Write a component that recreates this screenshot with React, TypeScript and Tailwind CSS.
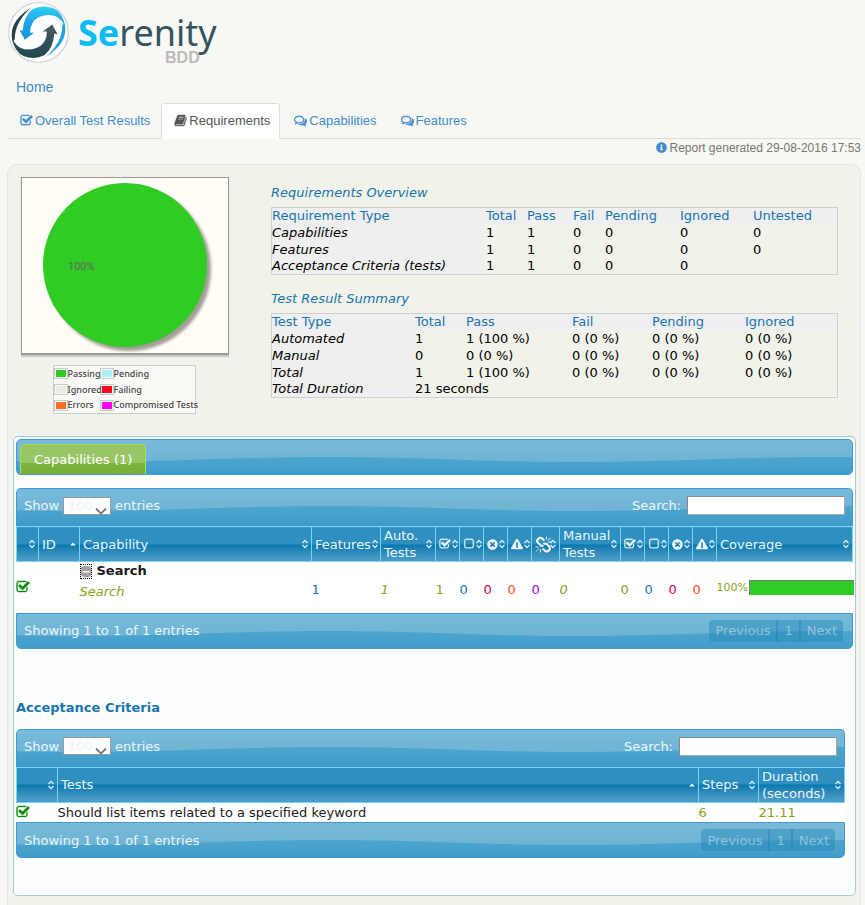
import { useId } from "react";
import type { ReactNode } from "react";
import { FaExclamationTriangle, FaInfoCircle, FaTimesCircle } from "react-icons/fa";

const paths = {
  check:
    "M1472 930v318q0 119-84.5 203.5t-203.5 84.5h-832q-119 0-203.5-84.5t-84.5-203.5v-832q0-119 84.5-203.5t203.5-84.5h832q63 0 117 25 15 7 18 23 3 17-9 29l-49 49q-10 10-23 10-3 0-9-2-23-6-45-6h-832q-66 0-113 47t-47 113v832q0 66 47 113t113 47h832q66 0 113-47t47-113v-254q0-13 9-22l64-64q10-10 23-10 6 0 12 3 20 8 20 29zm231-489l-814 814q-24 24-57 24t-57-24l-430-430q-24-24-24-57t24-57l110-110q24-24 57-24t57 24l263 263 647-647q24-24 57-24t57 24l110 110q24 24 24 57t-24 57z",
  square:
    "M1312 256h-832q-66 0-113 47t-47 113v832q0 66 47 113t113 47h832q66 0 113-47t47-113v-832q0-66-47-113t-113-47zm288 160v832q0 119-84.5 203.5t-203.5 84.5h-832q-119 0-203.5-84.5t-84.5-203.5v-832q0-119 84.5-203.5t203.5-84.5h832q119 0 203.5 84.5t84.5 203.5z",
  comments:
    "M704 384q-153 0-286 52t-211.5 141-78.5 191q0 82 53 158t149 132l97 56-35 84q34-20 62-39l44-31 53 10q78 14 153 14 153 0 286-52t211.5-141 78.5-191-78.5-191-211.5-141-286-52zm0-128q191 0 353.5 68.5t256.5 186.5 94 257-94 257-256.5 186.5-353.5 68.5q-86 0-176-16-124 88-278 128-36 9-86 16h-3q-11 0-20.5-8t-11.5-21q-1-3-1-6.5t.5-6.5 2-6l2.5-5 3.5-5.5 4-5 4.5-5 4-4.5q5-6 23-25t26-29.5 22.5-29 25-38.5 20.5-44q-124-72-195-177t-71-224q0-139 94-257t256.5-186.5 353.5-68.5zm822 1169q10 24 20.5 44t25 38.5 22.5 29 26 29.5 23 25q1 1 4 4.5t4.5 5 4 5 3.5 5.5l2.5 5 2 6 .5 6.5-1 6.5q-3 14-13 22t-22 7q-50-7-86-16-154-40-278-128-90 16-176 16-271 0-472-132 58 4 88 4 161 0 309-45t264-129q125-92 192-212t67-254q0-77-23-152 129 71 204 178t75 230q0 120-71 224.5t-195 176.5z",
  book: "M1703 478q40 57 18 129l-275 906q-19 64-76.5 107.5t-122.5 43.5h-923q-77 0-148.5-53.5t-99.5-131.5q-24-67-2-127 0-4 3-27t4-37q1-8-3-21.5t-3-19.5q2-11 8-21t16.5-23.5 16.5-23.5q23-38 45-91.5t30-91.5q3-10 .5-30t-.5-28q3-11 17-28t17-23q21-36 42-92t25-90q1-9-2.5-32t.5-28q4-13 22-30.5t22-22.5q19-26 42.5-84.5t27.5-96.5q1-8-3-25.5t-2-26.5q2-8 9-18t18-23 17-21q8-12 16.5-30.5t15-35 16-36 19.5-32 26.5-23.5 36-11.5 47.5 5.5l-1 3q38-9 51-9h761q74 0 114 56t18 130l-274 906q-36 119-71.5 153.5t-128.5 34.5h-869q-27 0-38 15-11 16-1 43 24 70 144 70h923q29 0 56-15.5t35-41.5l300-987q7-22 5-57 38 15 59 43zm-1064 2q-4 13 2 22.5t20 9.5h608q13 0 25.5-9.5t16.5-22.5l21-64q4-13-2-22.5t-20-9.5h-608q-13 0-25.5 9.5t-16.5 22.5zm-83 256q-4 13 2 22.5t20 9.5h608q13 0 25.5-9.5t16.5-22.5l21-64q4-13-2-22.5t-20-9.5h-608q-13 0-25.5 9.5t-16.5 22.5z",
};

function Icon({ name, className = "size-[14px]" }: { name: keyof typeof paths; className?: string }) {
  return (
    <svg
      viewBox="0 0 1792 1792"
      fill="currentColor"
      stroke="currentColor"
      strokeWidth="50"
      aria-hidden="true"
      className={`shrink-0 ${className}`}
    >
      <path d={paths[name]} />
    </svg>
  );
}

/* Snapped chain with small burst rays */
function BrokenLink() {
  return (
    <svg viewBox="0 0 17 17" className="-mr-1 size-[17px] shrink-0" fill="none" stroke="currentColor" aria-hidden="true">
      <path d="M9.5 4.5 L7 2.4 Q5 1 3.2 2.8 Q1.2 4.8 2.8 6.6 L5.6 9.3 Q7 10.3 8.4 9.3" strokeWidth="2.2" />
      <path d="M7.5 12.5 L10 14.8 Q12 16.2 14 14.4 Q15.8 12.4 14.2 10.6 L11.6 8 Q10 7 8.4 8.2" strokeWidth="2.2" />
      <path d="M11.5 0.5 V3.5 M12.8 4.4 L15.6 2 M13 6 H16.5 M5.5 13.2 V16.5 M4.2 12.4 L1.5 15 M3.8 11 H0.5" strokeWidth="1" />
    </svg>
  );
}

function Logo() {
  const arrow =
    "M197 84 Q190 40 160 27 Q128 16 100 30 Q72 52 70 95 L60 92 L76 122 L104 101 L92 101 Q92 68 118 54 Q146 42 170 52 Q188 62 197 84 Z";
  const crescent = "M194 70 Q210 128 140 172 Q188 128 188 78 Z";
  return (
    <div className="flex h-[70px] items-start pt-[2px] pl-[1px]">
      <svg viewBox="26 9 182 182" className="size-[61px] shrink-0" role="img" aria-label="Serenity logo">
        <defs>
          <linearGradient id="logo-blue" x1="0" y1="0" x2="0" y2="1">
            <stop offset="0" stopColor="#2fd0f2" />
            <stop offset="0.5" stopColor="#1ea2e8" />
            <stop offset="1" stopColor="#1595e0" />
          </linearGradient>
          <linearGradient id="logo-dark" x1="0" y1="0" x2="0" y2="1">
            <stop offset="0" stopColor="#1f4650" />
            <stop offset="1" stopColor="#4b5a63" />
          </linearGradient>
        </defs>
        <circle cx="117" cy="100" r="89" fill="#fff" stroke="#d3d6dc" strokeWidth="4" />
        <path d={arrow} fill="url(#logo-blue)" />
        <path d={crescent} fill="#1fa3e6" />
        <g transform="rotate(180 117 99)">
          <path d={arrow} fill="url(#logo-dark)" />
          <path d={crescent} fill="#243e49" />
        </g>
      </svg>
      <div className="flex flex-col pt-[13px] pl-[9px]">
        <span className="font-['Noto_Sans',sans-serif] text-[36px] leading-9 text-[#36545f]">
          <b className="text-[#0bbcf6]">Se</b>renity
        </span>
        <b className="self-end pr-[17px] font-['Liberation_Sans',Arial,sans-serif] text-base leading-[14px] text-[#bbb]">
          BDD
        </b>
      </div>
    </div>
  );
}

/* Blue glossy bar with a repeating wave highlight */
function Bar({ className, children }: { className: string; children?: ReactNode }) {
  const id = useId();
  return (
    <div
      className={`relative overflow-hidden border border-[#4297d7] bg-linear-to-b from-[#79bad9] to-[#66b0d3] text-[#eaf5f7] ${className}`}
    >
      <svg className="absolute inset-0 size-full" aria-hidden="true">
        <defs>
          <linearGradient id={`${id}g`} x1="0" y1="0" x2="0" y2="1">
            <stop offset="0" stopColor="#4ea5ce" />
            <stop offset="1" stopColor="#3a9aca" />
          </linearGradient>
          <pattern id={id} width="500" height="40" patternUnits="userSpaceOnUse" patternTransform="translate(60)">
            <path d="M0 22 C90 22 160 17 250 17 C350 17 400 22 500 22 V40 H0 Z" fill={`url(#${id}g)`} />
          </pattern>
        </defs>
        <rect width="100%" height="100%" fill={`url(#${id})`} />
      </svg>
      <div className="relative h-full">{children}</div>
    </div>
  );
}

function SortMark({ up = false }: { up?: boolean }) {
  return (
    <svg viewBox="0 0 8 10" className="h-[10px] w-2 shrink-0" aria-hidden="true">
      {up ? (
        <path d="M1 6.5 L4 3.5 L7 6.5 Z" fill="#eaf5f7" />
      ) : (
        <path d="M1.5 4 L4 1.5 L6.5 4 M1.5 6 L4 8.5 L6.5 6" fill="none" stroke="#d5eefa" strokeWidth="1.3" />
      )}
    </svg>
  );
}

function Th({ children, label, up }: { children?: ReactNode; label: string; up?: boolean }) {
  return (
    <th
      scope="col"
      className="h-[35px] border border-[#77d5f7] bg-linear-to-b from-[#2e8fc0] from-50% via-[#0078ae] via-50% to-[#4fa0c9] p-0 font-normal text-[#eaf5f7]"
    >
      <button
        type="button"
        aria-label={`Sort by ${label}`}
        className="flex w-full items-center justify-between pr-[2px] pl-[3px] text-left leading-[17px]"
      >
        <span>{children}</span>
        <SortMark up={up} />
      </button>
    </th>
  );
}

function LengthBar({ id }: { id: string }) {
  return (
    <Bar className="h-[38px] rounded-t-[5px] border-b-0">
      <div className="flex items-start justify-between px-[7px] pt-[7px] leading-[19px]">
        <label htmlFor={`${id}-length`} className="flex items-center">
          Show
          <span className="relative mx-1 flex">
            <select
              id={`${id}-length`}
              className="h-[18px] w-12 appearance-none border border-[#999] bg-white pl-1 leading-4 text-[#eaf5f7]"
            >
              <option>100</option>
            </select>
            <svg viewBox="0 0 12 8" className="pointer-events-none absolute right-1 bottom-0 h-2 w-3" aria-hidden="true">
              <path d="M1 1.5 L6 6.5 L11 1.5" fill="none" stroke="#777" strokeWidth="1.8" />
            </svg>
          </span>
          entries
        </label>
        <label htmlFor={`${id}-search`} className="flex items-center">
          Search:
          <input
            id={`${id}-search`}
            className="ml-[6px] h-[19px] w-[158px] border border-[#888] border-r-[#aaa] border-b-[#aaa] bg-white px-1 text-black"
          />
        </label>
      </div>
    </Bar>
  );
}

function InfoBar() {
  const base = "h-[22px] bg-[#2487b8]/45 px-[6px] text-[#eaf5f7]/45";
  return (
    <Bar className="h-9 rounded-b-[5px]">
      <div className="flex items-center justify-between pt-[6px] pr-[9px] pl-[7px]">
        <span>Showing 1 to 1 of 1 entries</span>
        <div className="flex">
          <button type="button" className={`${base} rounded-l-[4px] border-r-2 border-[#1d80b3]/40`}>
            Previous
          </button>
          <button type="button" className={`${base} border-r-2 border-[#1d80b3]/40 px-1`}>
            1
          </button>
          <button type="button" className={`${base} rounded-r-[4px]`}>
            Next
          </button>
        </div>
      </div>
    </Bar>
  );
}

function Tab({ icon, label, active }: { icon: keyof typeof paths; label: string; active?: boolean }) {
  return (
    <li className="-mb-px">
      <a
        href="#"
        className={`flex h-9 items-center gap-[2px] rounded-t-[4px] border pr-[9px] pb-[2px] pl-3 ${
          active ? "border-[#ddd] border-b-white bg-white text-[#555]" : "border-transparent text-[#428bca]"
        }`}
      >
        <Icon name={icon} className="size-[13px]" />
        <span>{label}</span>
      </a>
    </li>
  );
}

const legend = [
  ["Passing", "bg-[#30cb23]", "Pending", "bg-[#a8f0f3]"],
  ["Ignored", "bg-[#eeebe0]", "Failing", "bg-[#fb0a22]"],
  ["Errors", "bg-[#ff6f20]", "Compromised Tests", "bg-[#ff00ff]"],
];

function Swatch({ color }: { color: string }) {
  return (
    <td className="w-[14px] p-0">
      <div className="h-[11px] w-[14px] border border-[#ccc] p-px">
        <div className={`h-full ${color}`} />
      </div>
    </td>
  );
}

function SummaryTable({ widths, head, rows }: { widths: string[]; head: string[]; rows: string[][] }) {
  return (
    <table className="w-full table-fixed border-separate border-spacing-0 border border-[#d0d0d0] text-left leading-4 text-black">
      <colgroup>
        {widths.map((w, i) => (
          <col key={i} className={w} />
        ))}
      </colgroup>
      <thead>
        <tr className="bg-[#efefef] text-[#1776ae]">
          {head.map((h) => (
            <th key={h} scope="col" className="h-4 p-0 font-normal">
              {h}
            </th>
          ))}
        </tr>
      </thead>
      <tbody>
        {rows.map(([name, ...cells], r) => (
          <tr key={name}>
            <th
              scope="row"
              className={`bg-[#efefef] p-0 font-normal whitespace-nowrap italic ${
                r === rows.length - 1 ? "h-4" : "h-[17px]"
              }`}
            >
              {name}
            </th>
            {cells.map((c, i) => (
              <td key={i} className="p-0" colSpan={cells.length === 1 ? head.length - 1 : 1}>
                {c}
              </td>
            ))}
          </tr>
        ))}
      </tbody>
    </table>
  );
}

export default function App() {
  return (
    <div className="min-h-screen bg-[#f7f8f3] pr-1 pl-[7px] font-['DejaVu_Sans',Verdana,sans-serif] text-[13px] leading-[17px]">
      <header>
        <Logo />
        <nav className="font-['Liberation_Sans',Arial,sans-serif]">
          <a href="#" className="ml-[9px] flex h-[33px] items-center text-sm text-[#428bca]">
            Home
          </a>
          <ul className="flex gap-px border-b border-[#ddd]">
            <Tab icon="check" label="Overall Test Results" />
            <Tab icon="book" label="Requirements" active />
            <Tab icon="comments" label="Capabilities" />
            <Tab icon="comments" label="Features" />
          </ul>
        </nav>
        <p className="flex h-[17px] items-center justify-end gap-[3px] font-['Liberation_Sans',Arial,sans-serif] text-xs text-[#777]">
          <FaInfoCircle className="size-[11px] text-[#428bca]" aria-hidden="true" />
          Report generated 29-08-2016 17:53
        </p>
      </header>

      <main className="mt-2 rounded-t-[10px] border border-b-0 border-[#e5e6df] bg-[#f1f2e9] pt-3 pb-[10px]">
        <section className="flex h-[259px] gap-[42px] pr-[22px] pl-[13px]">
          <div className="w-[208px] shrink-0">
            <div className="h-[178px] border border-b-2 border-[#999] bg-[#fffdf6] shadow-[0_2px_1px_#ccc]">
              <svg viewBox="0 0 206 175" className="w-full" role="img" aria-label="Passing tests 100%">
                <defs>
                  <filter id="pie-shadow" x="-10%" y="-10%" width="120%" height="120%">
                    <feGaussianBlur stdDeviation="1.5" />
                  </filter>
                </defs>
                <circle cx="107" cy="91" r="82" fill="#a39e98" filter="url(#pie-shadow)" />
                <circle cx="103" cy="87" r="82" fill="#30cb23" />
                <text x="46" y="92" fontSize="11" fill="#5b7d52" stroke="#5b7d52" strokeWidth="0.3" fontFamily="Roboto, sans-serif">
                  100%
                </text>
              </svg>
            </div>
            <table className="mt-[10px] ml-8 w-[143px] table-fixed border border-[#ccc] bg-[#f9f9f6] font-['Noto_Sans',sans-serif] text-[9px] leading-[14px] font-medium text-[#454545]">
              <tbody>
                {legend.map(([a, ca, b, cb]) => (
                  <tr key={a} className="h-[16px]">
                    <Swatch color={ca} />
                    <td className="w-8 p-0">{a}</td>
                    <Swatch color={cb} />
                    <td className="p-0 whitespace-nowrap">{b}</td>
                  </tr>
                ))}
              </tbody>
            </table>
          </div>
          <div className="min-w-0 flex-1 pt-[7px]">
            <h2 className="mb-[6px] text-[#1776ae] italic">Requirements Overview</h2>
            <SummaryTable
              widths={["w-[214px]", "w-[41px]", "w-[46px]", "w-8", "w-[75px]", "w-[73px]", ""]}
              head={["Requirement Type", "Total", "Pass", "Fail", "Pending", "Ignored", "Untested"]}
              rows={[
                ["Capabilities", "1", "1", "0", "0", "0", "0"],
                ["Features", "1", "1", "0", "0", "0", "0"],
                ["Acceptance Criteria (tests)", "1", "1", "0", "0", "0", ""],
              ]}
            />
            <h2 className="mt-[15px] mb-[6px] text-[#1776ae] italic">Test Result Summary</h2>
            <SummaryTable
              widths={["w-[143px]", "w-[51px]", "w-[106px]", "w-20", "w-[93px]", ""]}
              head={["Test Type", "Total", "Pass", "Fail", "Pending", "Ignored"]}
              rows={[
                ["Automated", "1", "1 (100 %)", "0 (0 %)", "0 (0 %)", "0 (0 %)"],
                ["Manual", "0", "0 (0 %)", "0 (0 %)", "0 (0 %)", "0 (0 %)"],
                ["Total", "1", "1 (100 %)", "0 (0 %)", "0 (0 %)", "0 (0 %)"],
                ["Total Duration", "21 seconds"],
              ]}
            />
          </div>
        </section>

        <section className="mr-1 ml-[5px] rounded-[5px] border border-[#a6c9e2] bg-[#fcfdfd] px-[2px] pt-[2px] pb-[37px]">
          <Bar className="h-9 rounded-[5px]">
            <button
              type="button"
              className="mt-1 ml-[3px] h-[31px] rounded-t-[5px] border border-b-0 border-[#acdd4a] bg-linear-to-b from-[#98c566] from-60% via-[#7cb43c] via-60% to-[#75b03a] px-[13px] pb-[2px] text-white"
            >
              Capabilities (1)
            </button>
          </Bar>

          <div className="mt-[13px] bg-white">
            <LengthBar id="capabilities" />
            <table className="w-full table-fixed border-collapse text-left">
              <colgroup>
                <col className="w-[22px]" />
                <col className="w-[41px]" />
                <col />
                <col className="w-[69px]" />
                <col className="w-[55px]" />
                <col className="w-6" />
                <col className="w-6" />
                <col className="w-6" />
                <col className="w-6" />
                <col className="w-7" />
                <col className="w-[61px]" />
                <col className="w-6" />
                <col className="w-6" />
                <col className="w-6" />
                <col className="w-6" />
                <col className="w-[136px]" />
              </colgroup>
              <thead>
                <tr>
                  <Th label="status" />
                  <Th label="ID" up>ID</Th>
                  <Th label="capability">Capability</Th>
                  <Th label="features">Features</Th>
                  <Th label="automated tests">Auto. Tests</Th>
                  <Th label="passing automated tests"><Icon name="check" className="size-3" /></Th>
                  <Th label="pending automated tests"><Icon name="square" className="size-3" /></Th>
                  <Th label="failing automated tests"><FaTimesCircle className="size-[11px]" /></Th>
                  <Th label="automated tests with errors"><FaExclamationTriangle className="size-3" /></Th>
                  <Th label="compromised tests"><BrokenLink /></Th>
                  <Th label="manual tests">Manual Tests</Th>
                  <Th label="passing manual tests"><Icon name="check" className="size-3" /></Th>
                  <Th label="pending manual tests"><Icon name="square" className="size-3" /></Th>
                  <Th label="failing manual tests"><FaTimesCircle className="size-[11px]" /></Th>
                  <Th label="manual tests with errors"><FaExclamationTriangle className="size-3" /></Th>
                  <Th label="coverage">Coverage</Th>
                </tr>
              </thead>
              <tbody>
                <tr className="h-[51px] text-[#8aa11a]">
                  <td className="p-0"><Icon name="check" className="-ml-px size-[14px] text-[#078a07]" /></td>
                  <td />
                  <td className="p-0 align-top">
                    <div className="flex items-center gap-[5px] font-bold text-[#1a1a1a]">
                      <button
                        type="button"
                        aria-label="Collapse Search"
                        className="mt-px flex h-[15px] w-3 items-center outline-1 -outline-offset-1 outline-black outline-dotted"
                      >
                        <svg viewBox="0 0 12 13" className="h-[13px] w-3 shrink-0" aria-hidden="true">
                          <rect x="0.5" y="1" width="11" height="11" rx="4" fill="#a3a3a3" />
                          <rect x="2.5" y="6" width="7" height="1.5" fill="#fff" />
                        </svg>
                      </button>
                      Search
                    </div>
                    <a href="#" className="mt-1 block italic">Search</a>
                  </td>
                  <td className="p-0 pt-1 text-[#1776ae]">1</td>
                  <td className="p-0 pt-1 italic">1</td>
                  <td className="p-0 pt-1">1</td>
                  <td className="p-0 pt-1 text-[#1776ae]">0</td>
                  <td className="p-0 pt-1 text-[#c8005a]">0</td>
                  <td className="p-0 pt-1 text-[#ff4a20]">0</td>
                  <td className="p-0 pt-1 text-[#a000d8]">0</td>
                  <td className="p-0 pt-1 italic">0</td>
                  <td className="p-0 pt-1">0</td>
                  <td className="p-0 pt-1 text-[#1776ae]">0</td>
                  <td className="p-0 pt-1 text-[#c8005a]">0</td>
                  <td className="p-0 pt-1 text-[#ff4a20]">0</td>
                  <td className="p-0">
                    <div className="-mr-px flex items-center text-[11px]">
                      <span className="w-8">100%</span>
                      <div className="h-[15px] flex-1 border-t border-l border-[#777] bg-[#30cb23]" />
                    </div>
                  </td>
                </tr>
              </tbody>
            </table>
            <InfoBar />
          </div>

          <h3 className="mt-[50px] mb-[13px] font-bold text-[#1776ae]">Acceptance Criteria</h3>

          <div className="mr-2 bg-white">
            <LengthBar id="tests" />
            <table className="w-full table-fixed border-collapse text-left">
              <colgroup>
                <col className="w-[41px]" />
                <col />
                <col className="w-[60px]" />
                <col className="w-[86px]" />
              </colgroup>
              <thead>
                <tr>
                  <Th label="status" />
                  <Th label="tests" up>Tests</Th>
                  <Th label="steps">Steps</Th>
                  <Th label="duration">Duration (seconds)</Th>
                </tr>
              </thead>
              <tbody>
                <tr className="h-5 text-[#8aa11a]">
                  <td className="p-0"><Icon name="check" className="-ml-px size-[14px] text-[#078a07]" /></td>
                  <td className="p-0">
                    <a href="#" className="text-[#1a1a1a]">Should list items related to a specified keyword</a>
                  </td>
                  <td className="p-0">6</td>
                  <td className="p-0">21.11</td>
                </tr>
              </tbody>
            </table>
            <InfoBar />
          </div>
        </section>
      </main>
    </div>
  );
}
